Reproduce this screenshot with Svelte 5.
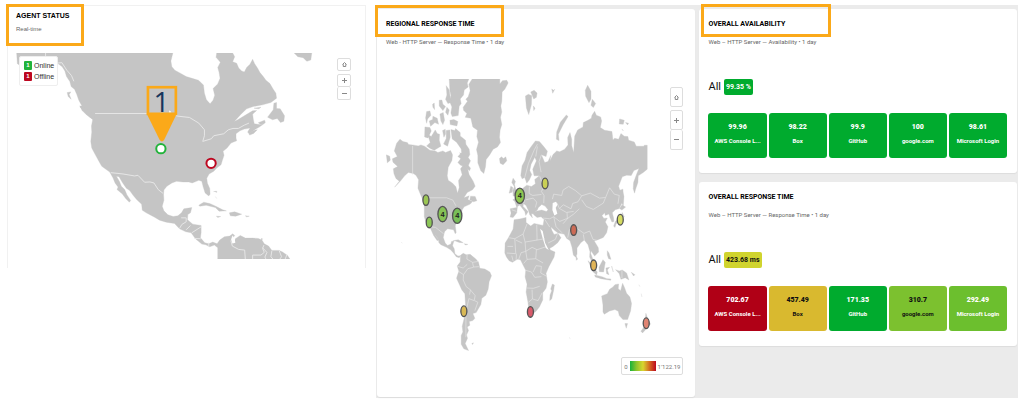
<script>
  const availability = [
    { value: '99.96', name: 'AWS Console L...', tone: 'green' },
    { value: '98.22', name: 'Box', tone: 'green' },
    { value: '99.9', name: 'GitHub', tone: 'green' },
    { value: '100', name: 'google.com', tone: 'green' },
    { value: '98.61', name: 'Microsoft Login', tone: 'green' }
  ];
  const response = [
    { value: '702.67', name: 'AWS Console L...', tone: 'red' },
    { value: '457.49', name: 'Box', tone: 'gold' },
    { value: '171.35', name: 'GitHub', tone: 'green' },
    { value: '310.7', name: 'google.com', tone: 'lime' },
    { value: '292.49', name: 'Microsoft Login', tone: 'leaf' }
  ];
  const summaries = [
    { title: 'OVERALL AVAILABILITY', sub: 'Web – HTTP Server — Availability • 1 day', total: '99.35 %', tone: 'green', tiles: availability, marked: true },
    { title: 'OVERALL RESPONSE TIME', sub: 'Web – HTTP Server — Response Time • 1 day', total: '423.68 ms', tone: 'yellow', tiles: response, marked: false }
  ];
  // Marker positions in world-map units
  const regions = [
    { x: 78, y: 391, c: '#9bc653' },
    { x: 88, y: 458, c: '#8cc657' },
    { x: 128, y: 433, c: '#86c256', n: 4 },
    { x: 172, y: 438, c: '#78bf58', n: 4 },
    { x: 360, y: 378, c: '#8fc750', n: 4 },
    { x: 436, y: 341, c: '#c9cf55' },
    { x: 662, y: 450, c: '#d5dc62' },
    { x: 522, y: 481, c: '#cc6b56' },
    { x: 582, y: 587, c: '#e0b457' },
    { x: 192, y: 725, c: '#d9b956' },
    { x: 392, y: 727, c: '#d95b6b' },
    { x: 740, y: 761, c: '#e08573' }
  ];
</script>

{#snippet controls()}
  <div class="controls">
    <button aria-label="Reset view"><svg viewBox="0 0 10 10"><path d="M1 5 5 1l4 4M2.500 4.500V9h5V4.500" /></svg></button>
    <div class="pair">
      <button aria-label="Zoom in"><svg viewBox="0 0 10 10"><path d="M0 5h10M5 0v10" /></svg></button>
      <button aria-label="Zoom out"><svg viewBox="0 0 10 10"><path d="M0 5h10" /></svg></button>
    </div>
  </div>
{/snippet}

<main>
  <section class="agents">
    <header class="marked">
      <h2>AGENT STATUS</h2>
      <p>Real-time</p>
    </header>
    <div class="map">
      <svg class="chart" viewBox="48 159 1008 620" role="img" aria-label="Agent map">
        <g class="land">
          <path d="M50 159H520L514 183 517 200 526 211 541 219 560 230 580 236 597 241 612 255 615 280 621 300 632 312 641 301 646 286 641 266 655 252 662 235 659 217 655 203 663 187 650 172 652 159H700L706 170 700 185 712 190 718 204 727 213 735 216 742 203 752 193 760 178 766 191 775 205 782 218 792 230 800 241 812 251 822 268 830 280 832 295 815 308 790 315 762 320 742 327 725 343 705 365 715 360 740 345 760 333 772 332 760 343 762 358 765 372 785 375 795 365 798 369 780 382 762 392 750 403 745 397 752 385 735 388 722 393 710 402 710 415 712 423 695 430 683 445 671 455 674 467 669 482 665 495 653 504 643 515 629 523 622 536 624 551 631 567 632 584 628 589 617 580 611 561 607 545 598 542 589 546 578 550 568 547 550 547 531 545 517 550 502 560 493 571 492 585 493 602 488 620 493 634 505 646 521 651 535 649 546 640 553 628 577 624 573 640 565 645 564 661 580 674 605 678V700L603 715 616 730 628 733 640 728 653 733 661 722 675 712 691 710 700 703 706 708 699 719 704 732 708 718 723 708 738 716 760 716 777 717 788 722 795 733 808 740 818 753 840 753 850 758 865 768 872 779H655V745L645 737 631 742 619 736 607 734 588 718 575 700 559 697 540 688 525 672 500 668 480 662 465 653 440 640 428 632 426 614 411 600 401 588 390 573 380 566 369 550 358 531 350 530 359 545 365 560 375 570 382 586 393 603 389 608 378 597 368 583 352 570 355 562 346 550 340 535 330 517 306 500 297 484 286 464 276 445 273 425 276 397 275 379 279 358 268 350 260 342 250 331 240 321 246 318 237 301 231 284 224 268 214 260 210 245 200 230 195 213 187 200 173 190 165 192 63 173 58 195 52 191Z" />
          <path d="M885 159H938L935 180 923 184 912 173 896 170Z" />
          <path d="M240 318 253 323 270 335 284 350 289 362 278 358 260 345 247 332Z" />
          <path d="M202 278 213 276 208 284 214 298 205 290Z" />
          <path d="M805 352 822 330 824 310 832 308 832 326 843 327 856 348 854 364 844 368 834 356 820 360Z" />
          <path d="M749 402 762 392 774 390 763 401 751 406ZM764 325 785 322 779 327ZM777 369 796 361 798 367 784 374Z" />
          <path d="M598 617 613 608 631 612 649 620 670 631 681 634 659 635 648 624 620 617 601 620ZM690 640 706 637 727 644 709 650 693 649ZM651 650 664 651 655 654ZM738 649 750 650 742 652Z" />
          <path d="M642 576 652 575V579M648 591 652 597M785 717 790 718 787 723" />
        </g>
        <g class="border">
          <path d="M137 159V185M165 190 186 188 201 211 215 227 222 244M286 341H505L535 349 570 353 598 370 615 390 615 408 610 425M610 425 636 417 643 408 673 402 687 390 701 386 717 386 735 376 749 370" />
          <path d="M333 519 370 523 405 529 415 527 435 548 451 547 463 550 476 570 490 581M540 687 547 675 560 667V655M545 655H560M560 691 573 678M577 700 605 682M585 717 604 718M628 730V741M700 709 695 725 699 740 718 750 736 752 738 779M760 779V767L785 767 795 759 790 747 794 737M790 745 803 759 797 773 800 779M818 754 815 772 821 779M840 754 847 772 842 779M863 766 858 779" />
        </g>
        <path class="white" d="M510 331 516 338 508 339ZM700 708 706 718 708 730 699 732 696 720Z" />
        <circle class="agent online" cx="484" cy="447" r="14" />
        <circle class="agent offline" cx="635" cy="491" r="14" />
        <rect class="pin-box" x="445" y="262" width="84" height="80" />
        <path class="pin-tip" d="M441 341H532L494 420Q487 430 480 420Z" />
        <text class="pin-label" x="486" y="337">1</text>
      </svg>
      <ul class="legend">
        <li><b class="on">1</b>Online</li>
        <li><b class="off">1</b>Offline</li>
      </ul>
      {@render controls()}
    </div>
  </section>

  <div class="board">
    <section class="card regional">
      <header class="marked">
        <h2>REGIONAL RESPONSE TIME</h2>
        <p>Web - HTTP Server — Response Time • 1 day</p>
      </header>
      <div class="map">
        <svg class="chart" viewBox="-42 27 894 891" role="img" aria-label="Regional response map">
          <g class="land">
            <g transform="translate(-60 90)">
              <path d="M60 118 69 125 82 128 86 134 98 135 115 138 123 135 134 139 150 151 166 153 174 158 189 153 197 158 212 152 218 165 216 182 205 202 202 228 205 241 218 250 228 261 233 280 238 263 236 242 247 225 242 207 252 193 263 205 268 225 280 244 286 259 278 270 262 278 252 294 268 288 264 299 278 305 271 313 253 321 247 330 245 342 239 359 229 368 226 379 229 398 226 402 221 390 203 387 194 396 190 413 196 430 203 437 213 433 215 425 222 424 218 438 223 447 225 462 234 469 242 468 238 474 229 471 221 460 212 450 200 443 183 435 177 429 175 418 164 403 157 388 167 408 176 420 172 423 161 407 153 389 148 379 137 365 133 350V320L129 301 122 285 114 265 116 240 108 226 100 221 85 218 74 228 62 243 44 262 58 244 48 236 42 222 40 207 53 200 39 187 37 177 52 170 43 153 50 130Z" />
              <path d="M19 165 29 169 31 181 22 189ZM64 428 67 430M240 158 251 170 258 188 272 205 269 213 255 200 242 196 234 188 243 176Z" />
              <path d="M272 289 286 290 291 303 281 306 270 300Z" />
            </g>
            <path d="M217 27H300V42L308 32 321 31 325 39 315 58 307 66 306 94 303 108 306 126 302 142 306 164 301 180 299 202 302 218 293 231 280 238 269 256 259 269 257 291 252 311 243 303 234 279 234 257 230 239 236 217 231 200 233 181 219 171 213 145 196 142 201 131 191 121 190 112 203 94 198 88 205 80 211 62 207 43Z" />
            <path d="M148 27H207L202 39 205 51 193 60 191 75 181 87 184 101 178 109 175 137 157 140 153 129 156 111 149 94 153 76 150 62Z" />
            <path d="M139 47 148 60 151 83 155 97 144 101 137 88 141 75ZM98 103 103 99 104 119 99 112ZM118 91 126 90 129 103 137 110 129 122 118 108ZM80 125 90 123 93 136 83 147 80 160 77 144ZM99 139 112 145 116 163 105 158 92 169 88 153 98 149ZM120 132 130 128 134 151 129 164 123 153ZM141 112 148 120 144 136 137 127ZM150 151 162 149 174 155 171 168 151 164ZM75 171 90 173 94 183 84 204 74 201ZM83 193 94 200 106 180 112 191 119 193 118 211 123 229 103 241 91 236 80 228 91 218ZM128 182 136 178 137 192 132 202ZM139 182 150 180 151 202 143 229 131 222 139 206ZM153 179 165 182 167 176 181 188 181 198 197 211 198 223 208 238 210 254 205 263 212 273 205 288 195 279 188 270 174 260 185 249 184 237 170 217 157 207Z" />
            <path d="M299 266 305 261 311 266 318 261 321 273 310 285 301 280ZM377 78 386 73 396 77 395 104 387 134 380 114ZM393 66 403 61 412 69 410 82 402 87ZM401 108 406 115 402 122ZM456 57 461 61 465 58 459 70Z" />
            <path transform="translate(300 180)" d="M63 137 67 108 76 91 82 68 95 49 107 33 119 35 132 50 143 64 139 80 125 75 135 98 145 95 153 77 151 93 160 74 171 63 180 66 195 58 205 45 204 23 211 8 216 28 216 47 222 68 225 19 234 0 250-9 251-22 265-29 275-35 277-44 285-56 290-44 303-39 306-27 302-7 315 1 328 3 337 5 340 30 345 25 357 28 364 11 374 19 385 20 387 31 404 36 410 49H434V46H443V118L431 128 416 138 415 158 408 178 405 190 401 177 402 158 410 136 418 116 403 122 395 137 381 136 368 141 357 169 361 181 370 178 371 199 369 216 359 236 347 240 338 249 342 265 343 275 337 277 331 263 328 253 317 257 315 249 307 258 313 266 323 265 317 277 325 291 321 309 311 323 297 329 284 334 296 354 297 367 285 379 274 363 273 371 281 392 286 405 279 402 270 382 271 366 265 345 254 331 244 338 232 355 232 373 228 383 221 376 217 353 211 333 201 326 193 313 175 310 165 302 153 291 157 303 163 314 175 311 184 324 174 339 160 350 145 359 138 345 135 327 126 304 130 287 133 269 124 261 112 263 102 255 101 247 112 244 126 241 140 245 145 240 136 229 126 224 116 233 112 242 105 245 106 253 95 252 98 264 90 255 86 242 79 227 71 221 70 230 82 242 85 246 78 257 75 245 60 226 53 230 51 249 40 263 31 262 34 250 31 237 51 233 45 215 39 210 55 202 65 179 76 170 81 166 95 170 107 162 105 149 119 138 103 138 99 118 110 93 105 82 94 103 90 122 96 134 89 150 81 160 75 143 67 147Z" />
            <path d="M340 325 347 335 344 344 350 364 354 374 340 379 339 362 344 351 336 338ZM333 349 339 353 337 367 328 370Z" />
            <path d="M500 135 505 140 490 165 476 193 478 212 470 208 471 186 482 157ZM564 46 574 64V88L568 98 558 79 557 61ZM578 88 588 101 581 113 574 106ZM660 147 674 151 671 163 659 162ZM678 158 687 160 684 165ZM667 177 671 183ZM668 360 673 380 671 411 666 397ZM660 416 667 406 678 412 667 421Z" />
            <g transform="translate(0 420)">
              <path d="M182 137 190 131 199 135 211 134 218 140 228 148 236 158 240 176 255 178 270 187 275 198 268 216 265 239 258 257 246 266 243 285 229 309 219 312 225 326 219 333 208 336 210 347 202 352 206 363 200 376 203 386 196 402 206 423 192 418 184 404 184 378 189 367 187 350 193 326 194 306 197 287 195 252 186 241 170 206 173 196 177 185 172 169 181 157Z" />
              <path d="M343 30 363 27 379 23 379 38 393 49 403 41 430 47 436 73 444 104 452 121 466 127 463 142 447 172 439 191 443 217 439 236 429 249 429 271 419 292 409 305 395 315 388 303 384 274 379 247 382 224 376 202 378 182 371 168 362 150 352 149 338 158 328 153 320 142 315 130 316 100 326 84 340 58Z" />
              <path d="M216 402 221 400 218 405ZM160 93 175 90 190 99 178 98 167 94ZM193 102 204 104 197 106Z" />
            </g>
            <g transform="translate(420 420)">
              <path d="M38 223 44 226 42 241 36 268 30 273 31 256 36 243 33 238ZM248 8 254 21 241 34 229 43 226 53 222 49 228 34 242 28ZM109 139 114 148 110 152ZM145 153 158 165 165 178 173 187 171 196 160 186ZM165 196 175 198 187 201 202 207 214 208 213 212 184 207 167 202ZM178 173 190 150 197 158 192 187 179 186ZM199 175 210 173 203 181 208 195 201 192ZM203 123 208 130 214 149 207 147 203 136ZM216 169 221 187ZM228 180 239 184 248 181 261 190 268 211 257 204 244 209 239 192ZM275 188 286 195 282 199Z" />
              <path d="M186 259 203 252 210 239 220 232 226 225 237 223 236 237 243 243 249 221 255 234 261 251 271 262 276 282 273 304 264 330 250 330 239 318 236 305 226 300 210 304 194 314 190 307 190 286ZM256 342 264 342 260 356ZM319 311 325 330 333 343 319 359 309 370 304 365 315 350ZM298 225 301 231M305 252 307 262M88 384 92 387" />
            </g>
          </g>
          <path class="white" d="M459 400 469 396 474 404 468 414 473 432 464 437 458 421ZM421 477 429 484 436 519 447 541 438 535 429 506Z" />
          <g class="border">
            <path d="M38 228V314M78 384H140L159 391 168 408M82 470 107 473 131 492M175 450 168 452" />
            <g transform="translate(300 180)">
              <path d="M75 143 86 101 104 59 113 43M113 50 108 80M125 75 118 95 124 127M120 139 132 173 125 185 133 197 132 220M89 170 88 191 99 197 125 194M59 198 75 207 72 220M78 210 100 205 111 217 107 233M36 240 50 245M158 208 162 193 186 197 190 181 207 170 227 182 246 198 235 216 219 221 214 237 191 225 179 236 172 220M246 198 272 190 300 205 318 203 311 220 281 239 260 230 246 210M318 203 330 174 344 193 359 197 355 222M130 265 150 267 162 261 180 275 205 265 222 253 239 237M162 261 169 291 187 309M190 282 205 265M204 324 209 301 224 286M225 291 253 311 270 304 280 329 292 332M254 332 251 314M135 269 150 292M145 340 167 329 174 311M179 236 200 248 222 245M202 248 203 266" />
            </g>
            <g transform="translate(0 420)">
              <path d="M202 133 201 148 218 158 237 155M218 158 221 172 237 171M174 184 191 195 190 211 199 231 211 240 226 258 223 273 207 267 202 290 198 304 198 383M173 170 190 175 202 164M191 195 204 177 221 173M224 273 234 278 225 303M212 240 209 255M327 84 345 87 370 73 382 42M345 87 348 132 321 130M370 73 376 97 412 91 411 45M412 91 435 87M376 97 378 125 364 129 356 151M378 125 397 113 412 120 436 112M378 125 382 149 372 161M382 149 408 147 430 160M408 147 410 120M378 182 395 187 405 203 425 201M400 187 409 168 425 170M425 170 423 190 441 200M380 235 401 236 420 230M397 240 398 268 386 278M398 268 415 273 427 250M340 154 336 138M349 150 350 132M323 110 340 110M348 91 367 100" />
            </g>
            <path d="M667 602V625" />
          </g>
          {#each regions as r}
            <ellipse class="region" cx={r.x} cy={r.y} rx={r.n ? 14 : 9} ry={r.n ? 23 : 16} fill={r.c} />
            {#if r.n}<text class="count" x={r.x} y={r.y + 8}>{r.n}</text>{/if}
          {/each}
        </svg>
        {@render controls()}
        <div class="scale"><span>0</span><i></i><span>1'122.19</span></div>
      </div>
    </section>

    <div class="stack">
      {#each summaries as s}
        <section class="card">
          <header class:marked={s.marked}>
            <h2>{s.title}</h2>
            <p>{s.sub}</p>
          </header>
          <div class="total">All <b class={s.tone}>{s.total}</b></div>
          <ul class="tiles">
            {#each s.tiles as t}
              <li class={t.tone}><b>{t.value}</b><span>{t.name}</span></li>
            {/each}
          </ul>
        </section>
      {/each}
    </div>
  </div>
</main>

<style>
  :global(body) { margin: 0; background: #fff; }
  *, .marked::after { box-sizing: border-box; }
  main {
    display: grid;
    grid-template-columns: 359fr 642fr;
    column-gap: 10px;
    align-items: start;
    padding: 5px 4px 4px 7px;
    font-family: Roboto, "Liberation Sans", Arial, sans-serif;
    color: #111;
  }
  h2, p, ul { margin: 0; padding: 0; list-style: none; }
  h2 { font-size: 7px; line-height: 12px; font-weight: 700; color: #000; white-space: nowrap; }
  p { font-size: 6px; line-height: 10px; color: #666; white-space: nowrap; }
  header { position: relative; }
  .marked::after { content: ""; position: absolute; border: 3px solid #fba919; pointer-events: none; }

  .agents {
    font-family: "Liberation Sans", Arial, sans-serif;
    border: 1px solid #f1f1f1;
    border-bottom: 0;
    padding: 4px 14px 9px 8px;
  }
  .agents p { margin-top: 2px; }
  .agents header { margin-bottom: 19px; }
  .agents .marked::after { top: -6px; left: -10px; width: 78px; height: 42px; }
  .map { position: relative; }
  .chart { display: block; width: 100%; height: auto; }
  .land { fill: #c5c5c5; stroke: #c5c5c5; stroke-width: 1; stroke-linejoin: round; }
  .border { fill: none; stroke: #e6e6e6; stroke-width: 3; stroke-linejoin: round; }
  .regional .border { stroke-width: 2; }
  .white { fill: #fff; }
  .agent { fill: #fff; stroke-width: 6; }
  .online { stroke: #22b33b; }
  .offline { stroke: #bd0720; }
  .pin-box { fill: none; stroke: #fba919; stroke-width: 8; }
  .pin-tip { fill: #fba919; }
  .pin-label { font: 84px "Open Sans", sans-serif; fill: #17355c; text-anchor: middle; }

  .legend {
    position: absolute; top: 3px; left: 3px;
    display: grid; gap: 2px; padding: 4px 3px 4px 4px;
    background: #fff; border: 1px solid #eee; border-radius: 2px;
    font-size: 7px; line-height: 9px; color: #333;
  }
  .legend li { display: flex; align-items: center; gap: 2px; }
  .legend b { width: 8px; border-radius: 1px; color: #fff; font-size: 6px; text-align: center; }
  .on { background: #22b33b; }
  .off { background: #bd0720; }

  .controls { position: absolute; top: 5px; right: 0; display: grid; gap: 3px; }
  .pair { display: grid; }
  button {
    display: grid; place-items: center; width: 14px; height: 13px; padding: 0;
    background: #fff; border: 1px solid #ddd; border-radius: 2px;
  }
  .pair button + button { border-top: 0; }
  button svg { width: 5px; height: 5px; fill: none; stroke: #888; stroke-width: 2; overflow: visible; }

  .board {
    display: grid;
    grid-template-columns: 319fr 318fr;
    gap: 4px;
    padding: 4px 1px 1px;
    background: #ebebeb;
  }
  .card { background: #fff; border-radius: 3px; padding: 9px 10px 15px 9px; box-shadow: 0 1px 1px #ddd; }
  header p { margin-top: 7px; }
  .regional .marked::after { top: -13px; left: -11px; width: 129px; height: 32px; }
  .regional header { margin-bottom: 32px; }
  .regional { padding-right: 12px; padding-bottom: 22px; }
  .regional .controls { top: 8px; }
  .regional button { width: 13px; height: 20px; }
  .regional button svg { height: 7px; }
  .region { stroke: #555; stroke-width: 4; }
  .count { font: 700 22px "Liberation Sans", sans-serif; text-anchor: middle; fill: #222; }
  .scale {
    position: absolute; right: 0; bottom: 0; display: flex; align-items: center; gap: 2px;
    height: 18px; padding: 0 2px; background: #fff; border: 1px solid #ddd; border-radius: 2px;
    font-size: 6px; color: #777;
  }
  .scale i { width: 26px; height: 10px; background: linear-gradient(90deg, #16b23a, #8cc42c, #d8d630, #d46a22, #bd0720); }

  .stack { display: grid; gap: 9px; align-content: start; }
  .stack .marked::after { top: -14px; left: -7px; width: 130px; height: 33px; }
  .total { display: flex; align-items: center; gap: 3px; margin-top: 32px; font-size: 11px; line-height: 16px; }
  .total b { padding: 0 2px; border-radius: 2px; font-size: 7px; }
  .tiles { display: grid; grid-template-columns: repeat(5, minmax(0, 1fr)); gap: 2px; margin-top: 18px; }
  .tiles li {
    display: flex; flex-direction: column; align-items: center; justify-content: center;
    height: 45px; padding-bottom: 4px; border-radius: 3px; font-size: 6px; line-height: 14px; white-space: nowrap;
    font-weight: 700;
  }
  .tiles b { font-size: 7px; }
  .green { background: #00ab2e; color: #fff; }
  .red { background: #b00016; color: #fff; }
  .gold { background: #d9b92f; }
  .lime { background: #7cc12f; }
  .leaf { background: #6cbf2e; color: #fff; }
  .yellow { background: #d0d42e; }
</style>
